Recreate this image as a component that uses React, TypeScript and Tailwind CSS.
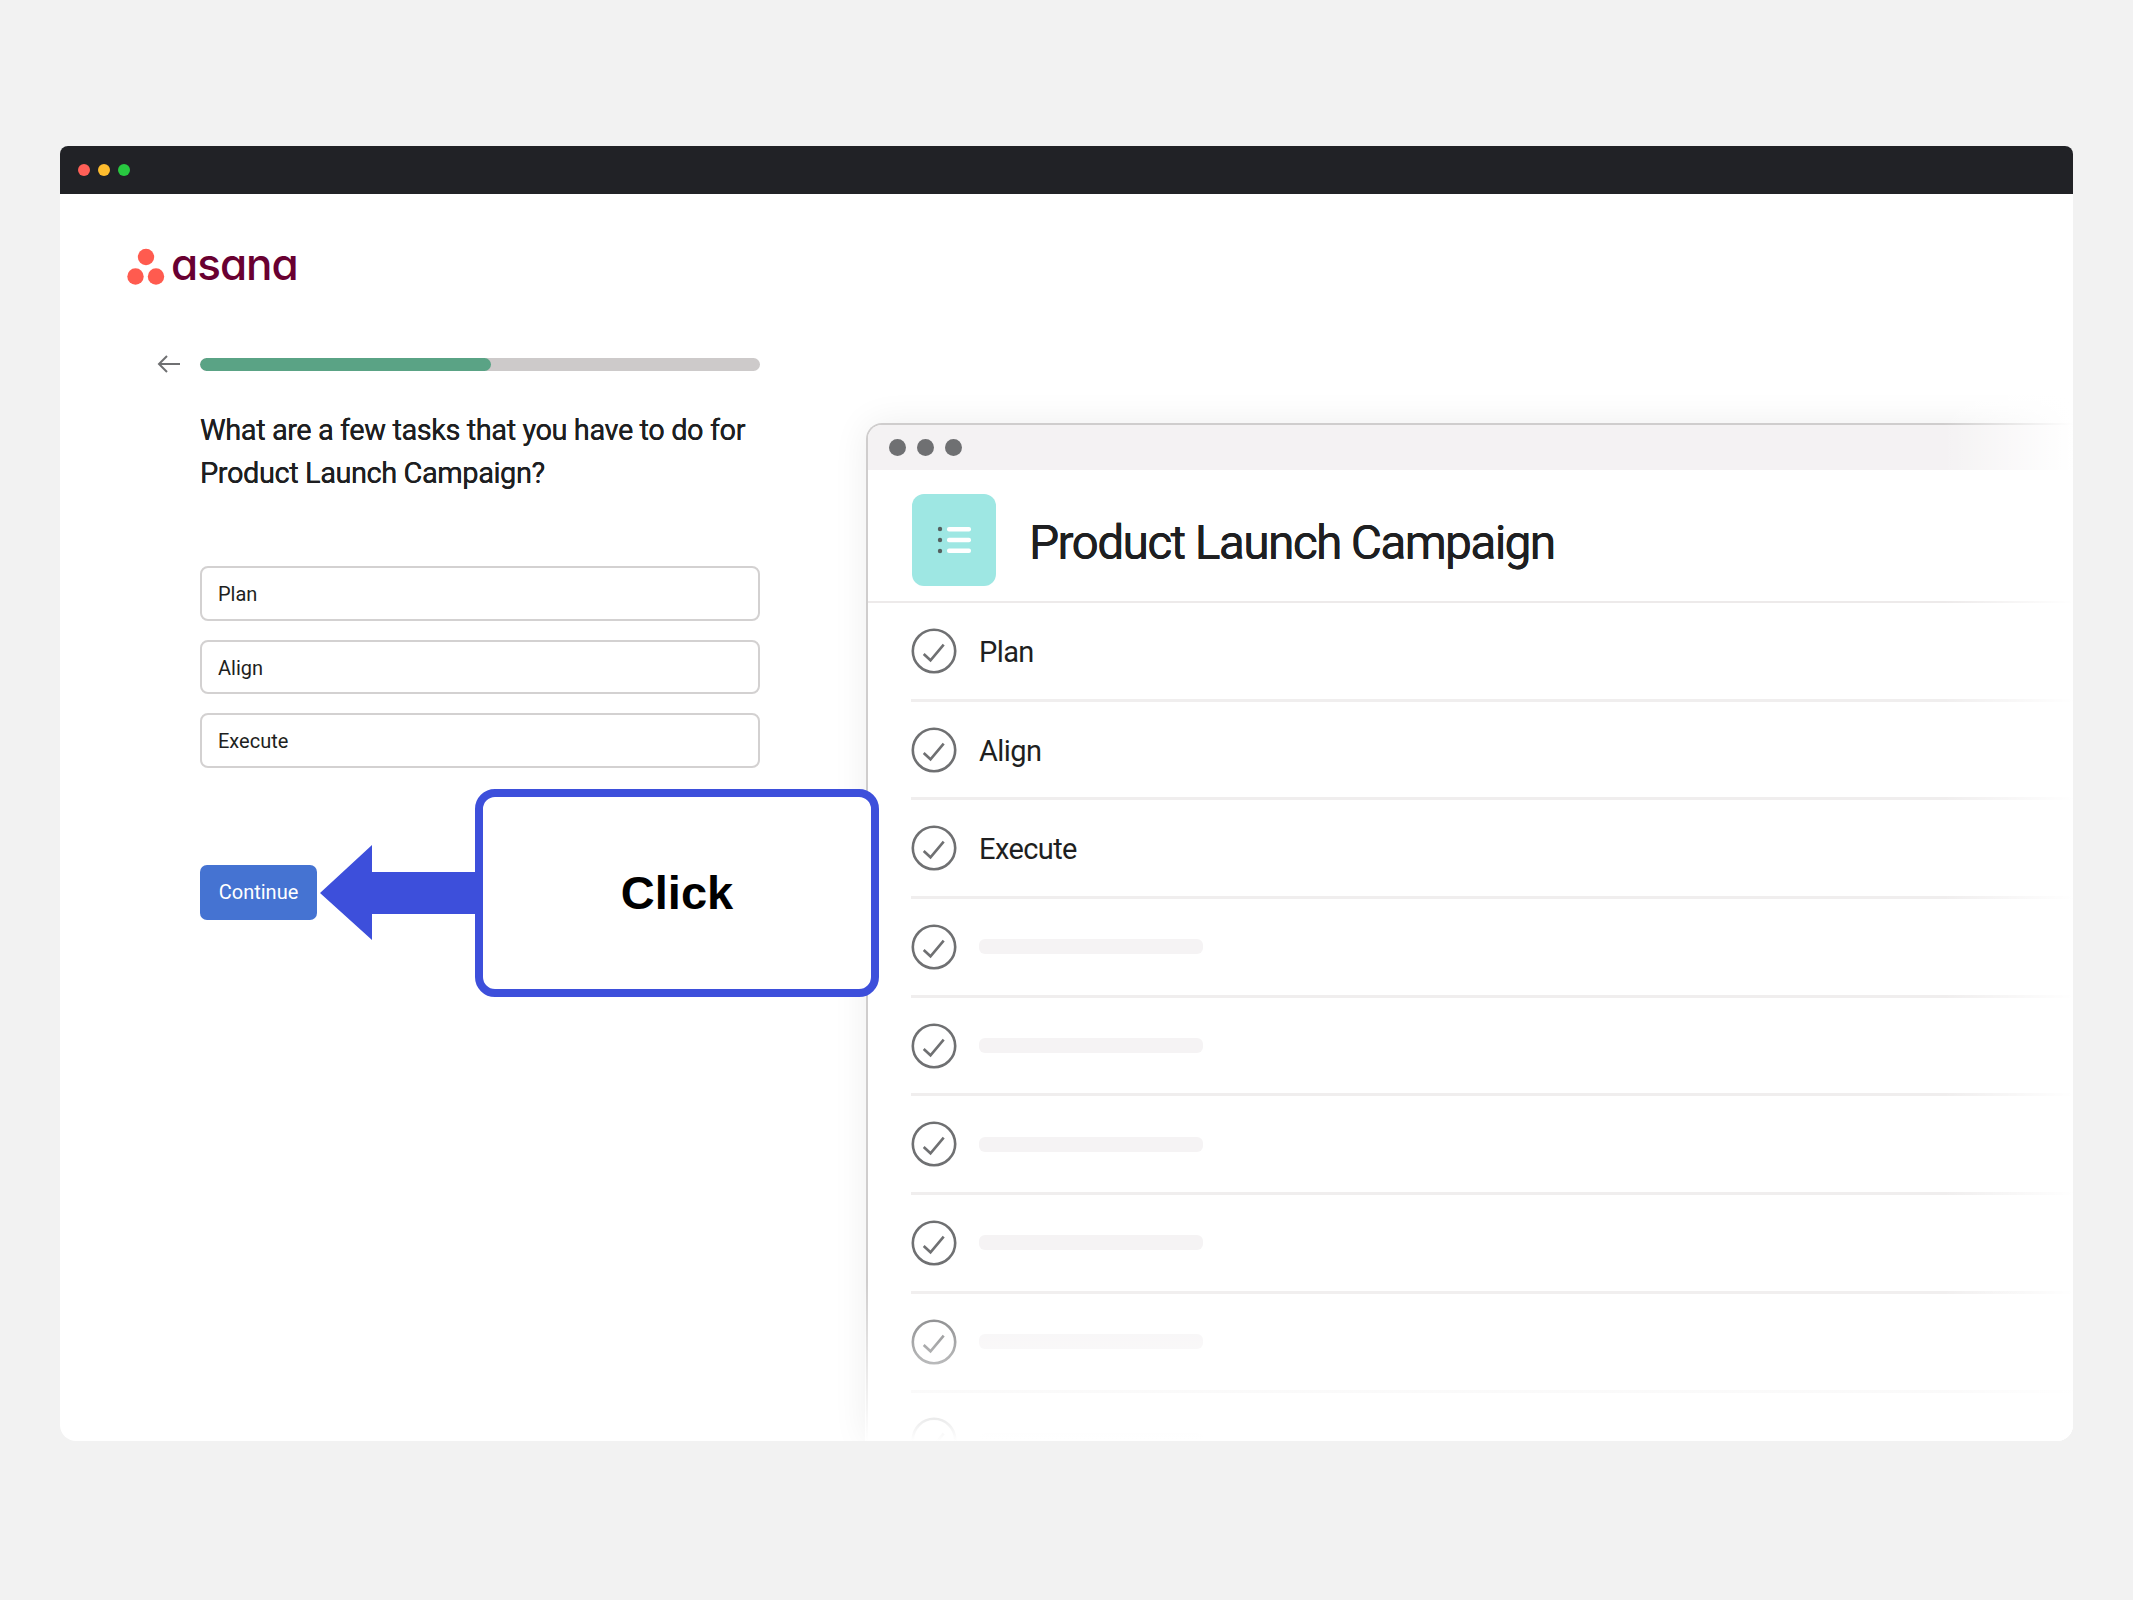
const ANSWERS = ['Plan', 'Align', 'Execute']
const ROWS: (string | null)[] = ['Plan', 'Align', 'Execute', null, null, null, null, null, null]

function CheckCircle() {
  return (
    <svg width="46" height="46" viewBox="0 0 46 46" fill="none" className="shrink-0">
      <circle cx="23" cy="23" r="21.2" stroke="#6f7072" strokeWidth="2.6" />
      <path d="M12.7 26l6.8 6.3L32.7 16.7" stroke="#6f7072" strokeWidth="2.6" />
    </svg>
  )
}

function AsanaLogo() {
  return (
    <div className="flex items-start gap-[5px]">
      <svg width="40" height="38" viewBox="0 0 40 38" fill="#ff5b4f">
        <circle cx="20" cy="9" r="8.2" />
        <circle cx="9.5" cy="28.5" r="8.2" />
        <circle cx="30" cy="28.5" r="8.2" />
      </svg>
      <span className="-mt-[3px] font-[Inter,sans-serif] text-[44px] leading-[38px] font-medium tracking-[-1px] text-[#690031] [font-feature-settings:'cv11']">
        asana
      </span>
    </div>
  )
}

export default function App() {
  return (
    <div className="min-h-[1600px] bg-[#f2f2f2] pt-[146px] pl-[60px] font-[Roboto,sans-serif] text-[#1e1f21]">
      <div className="relative flex h-[1295px] w-[2013px] flex-col overflow-hidden rounded-t-[8px] rounded-b-[16px] bg-white">
        {/* Window bar */}
        <div className="flex h-[48px] shrink-0 items-center gap-[8px] bg-[#212226] pl-[18px]">
          <span className="size-[12px] rounded-full bg-[#ff5f57]" />
          <span className="size-[12px] rounded-full bg-[#febc2e]" />
          <span className="size-[12px] rounded-full bg-[#28c840]" />
        </div>

        <div className="flex min-h-0 flex-1">
          {/* Onboarding form */}
          <div className="w-[806px] shrink-0 pt-[54px]">
            <div className="pl-[66px]">
              <AsanaLogo />
            </div>
            <div className="mt-[69px] flex items-center gap-[19px] pl-[97px]">
              <svg width="24" height="18" viewBox="0 0 24 18" fill="none" className="shrink-0">
                <path d="M23 9H2M10 1L2 9l8 8" stroke="#6f7072" strokeWidth="2" />
              </svg>
              <div className="h-[13px] w-[560px] overflow-hidden rounded-full bg-[#cdcaca]">
                <div className="h-full w-[291px] rounded-full bg-[#5aa385]" />
              </div>
            </div>

            <div className="w-[720px] pl-[140px]">
              <h1 className="mt-[36px] text-[29px] leading-[43px] font-normal tracking-[-0.45px] [text-shadow:0_0_0.4px_#1e1f21]">
                What are a few tasks that you have to do for
                <br />
                Product Launch Campaign?
              </h1>

              <div className="mt-[71px] flex flex-col gap-[19px]">
                {ANSWERS.map((a) => (
                  <input
                    key={a}
                    readOnly
                    value={a}
                    className="h-[54.5px] w-[560px] rounded-[8px] border-2 border-[#d3d1d1] bg-white px-[16px] pt-[2px] text-[20px] text-[#1e1f21] outline-none"
                  />
                ))}
              </div>

              <button
                type="button"
                className="mt-[97px] h-[55px] w-[117px] rounded-[7px] bg-[#4573d2] text-[20px] text-white"
              >
                Continue
              </button>
            </div>
          </div>

          {/* Project preview */}
          <div className="relative mt-[229px] min-w-0 flex-1 rounded-tl-[16px] border-t-2 border-l-2 border-[#cfcdcd] shadow-[0_0_36px_rgba(0,0,0,0.07)]">
            <div className="flex h-[45px] items-center gap-[11px] rounded-tl-[14px] bg-[#f4f2f3] pl-[21px]">
              <span className="size-[17px] rounded-full bg-[#6f7072]" />
              <span className="size-[17px] rounded-full bg-[#6f7072]" />
              <span className="size-[17px] rounded-full bg-[#6f7072]" />
            </div>

            <div className="flex h-[133px] items-start gap-[33px] border-b-2 border-[#edeaea] pt-[24px] pl-[44px]">
              <div className="flex h-[92px] w-[84px] shrink-0 items-center justify-center rounded-[12px] bg-[#9ee7e3]">
                <svg width="36" height="30" viewBox="0 0 36 30" fill="none">
                  <circle cx="4" cy="4" r="2.2" fill="#55605f" />
                  <circle cx="4" cy="15" r="2.2" fill="#55605f" />
                  <circle cx="4" cy="26" r="2.2" fill="#55605f" />
                  <rect x="11" y="2" width="24" height="4.5" rx="2" fill="#fff" />
                  <rect x="11" y="12.7" width="24" height="4.5" rx="2" fill="#fff" />
                  <rect x="11" y="23.5" width="24" height="4.5" rx="2" fill="#fff" />
                </svg>
              </div>
              <h2 className="mt-[21px] text-[48px] leading-[56px] font-normal tracking-[-1.75px] [text-shadow:0_0_0.5px_#1e1f21]">
                Product Launch Campaign
              </h2>
            </div>

            <div className="ml-[43px]">
              {ROWS.map((label, i) => (
                <div key={i} className="flex h-[98.7px] items-center gap-[22px] border-b-[3px] border-[#f0eeee]">
                  <CheckCircle />
                  {label ? (
                    <span className="pt-[4px] text-[29px] tracking-[-0.6px]">{label}</span>
                  ) : (
                    <div className="h-[15px] w-[224px] rounded-[6px] bg-[#f5f3f4]" />
                  )}
                </div>
              ))}
            </div>

            {/* Fades over the preview */}
            <div className="absolute top-[-30px] right-0 bottom-0 w-[130px] bg-gradient-to-r from-white/0 to-white" />
            <div className="absolute right-0 bottom-0 left-[-3px] h-[160px] bg-gradient-to-b from-white/0 to-white" />
          </div>
        </div>

        {/* Callout over the form */}
        <svg width="160" height="96" viewBox="0 0 160 96" className="absolute top-[699px] left-[260px]" fill="#3d4fdb">
          <path d="M0 48L52 0v27h108v42H52v26z" />
        </svg>
        <div className="absolute top-[643px] left-[415px] flex h-[208px] w-[404px] items-center justify-center rounded-[20px] border-[8px] border-[#3d4fdb] bg-white font-['Liberation_Sans',Arial,sans-serif] text-[47px] font-bold text-black">
          Click
        </div>
      </div>
    </div>
  )
}
